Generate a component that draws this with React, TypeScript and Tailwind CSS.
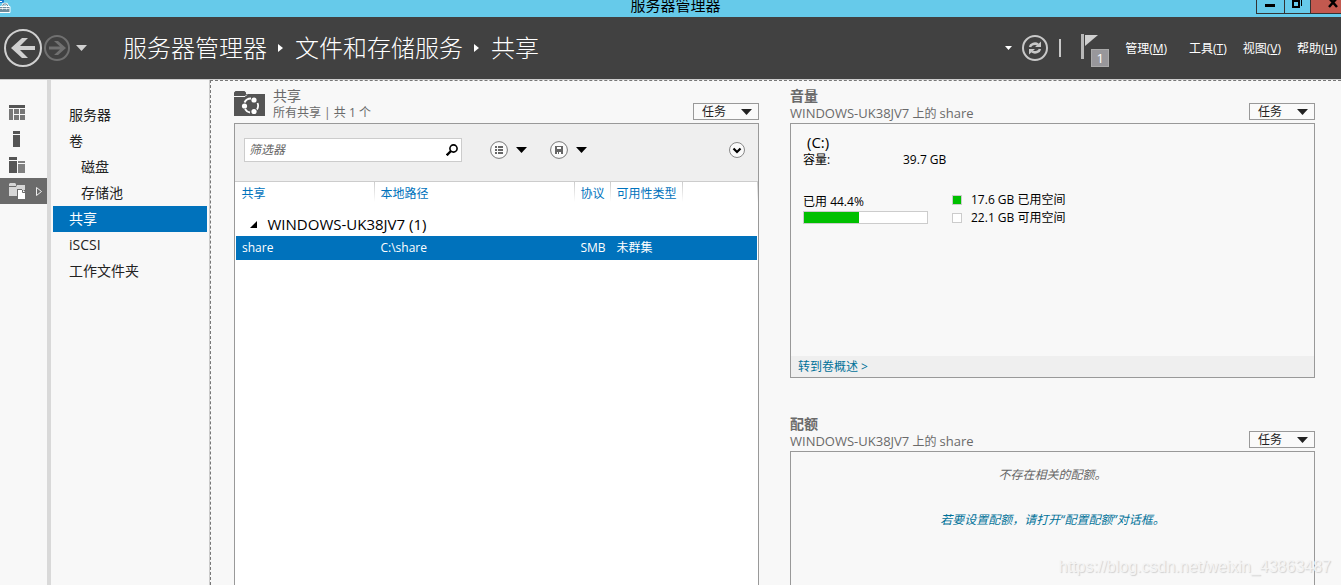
import type { ReactNode } from "react";

function Caret({ className = "" }: { className?: string }) {
  return (
    <svg className={`shrink-0 ${className}`} width="11" height="6" viewBox="0 0 11 6" aria-hidden="true">
      <path d="M0 0h11L5.5 6z" fill="currentColor" />
    </svg>
  );
}

function TasksButton() {
  return (
    <button
      type="button"
      className="mb-[3px] flex h-[17px] w-[66px] items-center justify-between border border-[#999] bg-[#fafafa] pr-1.5 pl-2 text-xs leading-none text-[#222]"
    >
      任务
      <Caret />
    </button>
  );
}

interface TileHeaderProps {
  title: string;
  subtitle: ReactNode;
  bold?: boolean;
  icon?: ReactNode;
}

function TileHeader({ title, subtitle, bold, icon }: TileHeaderProps) {
  return (
    <div className="flex h-[35px] items-end justify-between text-[#6a6a6a]">
      <div className="flex gap-2 self-start">
        {icon}
        <div>
          <h2 className={bold ? "text-sm leading-4 font-bold" : "text-sm leading-4"}>{title}</h2>
          <p className="text-xs leading-[18px] whitespace-nowrap">{subtitle}</p>
        </div>
      </div>
      <TasksButton />
    </div>
  );
}

function ShareLocation() {
  return (
    <>
      <span className="text-[13px]">WINDOWS-UK38JV7</span> 上的 <span className="text-[13px]">share</span>
    </>
  );
}

function TitleBar() {
  return (
    <div className="relative flex h-[17px] items-end justify-center overflow-hidden bg-[#66caea]">
      <svg className="absolute top-0 left-0" width="12" height="14" viewBox="0 0 12 14" aria-hidden="true">
        <path d="M0 0h4v3H0z" fill="#1b7fd4" />
        <path d="M0 1h2v1H0z" fill="#fff" />
        <path d="M2.500 6.500L3.500 4h3l1.500 2.500" fill="none" stroke="#fff" strokeWidth="2.500" />
        <path d="M2.500 6.500L3.500 4h3l1.500 2.500" fill="none" stroke="#667f8d" />
        <path d="M-1 6.500h11v6H-1z" fill="#6f8c9c" stroke="#fff" />
        <path d="M0 8.500h9.500M2.500 7.500v2M6.500 7.500v2" stroke="#fff" strokeWidth="0.800" />
      </svg>
      <span className="mr-[-10px] text-[15px] leading-6 text-black">服务器管理器</span>
      <div className="absolute top-0 right-0 flex h-3.5">
        <button type="button" aria-label="最小化" className="w-7 border-b border-l border-[#333]">
          <svg width="27" height="13" viewBox="0 0 27 13">
            <path d="M8 4h10v3H8z" fill="#000" />
          </svg>
        </button>
        <button type="button" aria-label="还原" className="w-[26px] border-b border-l border-[#333]">
          <svg width="25" height="13" viewBox="0 0 25 13">
            <path d="M8 1h6v6H8z" fill="none" stroke="#000" strokeWidth="2" />
            <path d="M16.500 0v6" stroke="#000" />
          </svg>
        </button>
        <button type="button" aria-label="关闭" className="w-[31px] border-b border-l border-[#333] bg-[#c2594f]">
          <svg width="30" height="13" viewBox="0 0 30 13">
            <path d="M18 -2l8 9M26 -2l-8 9" stroke="#000" strokeWidth="2.500" />
          </svg>
        </button>
      </div>
    </div>
  );
}

function CrumbArrow() {
  return (
    <svg className="mx-[11px]" width="6" height="8" viewBox="0 0 6 8" aria-hidden="true">
      <path d="M0 0l5 4-5 4z" fill="#fff" />
    </svg>
  );
}

const menus = [
  { label: "管理", key: "M", className: "ml-4" },
  { label: "工具", key: "T", className: "ml-[22px]" },
  { label: "视图", key: "V", className: "ml-4" },
  { label: "帮助", key: "H", className: "ml-4" },
];

function Header() {
  return (
    <header className="flex h-[62px] items-center bg-[#414141] px-1 text-white">
      <button type="button" aria-label="后退">
        <svg width="38" height="38" viewBox="0 0 38 38">
          <circle cx="19" cy="19" r="18" fill="none" stroke="#d0d0d0" strokeWidth="2" />
          <path d="M7 19L18 9h6l-8 8h15v4H16l8 8h-6z" fill="#d0d0d0" />
        </svg>
      </button>
      <button type="button" aria-label="前进" className="ml-0.5">
        <svg width="26" height="26" viewBox="0 0 26 26">
          <circle cx="13" cy="13" r="12" fill="none" stroke="#707070" strokeWidth="2" />
          <path d="M22 13l-8-7h-4l6 5.500H5v3h11L10 20h4z" fill="#707070" />
        </svg>
      </button>
      <button type="button" aria-label="历史记录" className="ml-1.5 text-[#d0d0d0]">
        <Caret />
      </button>

      <nav className="ml-9 flex items-center text-2xl font-light whitespace-nowrap">
        <a href="#dashboard">服务器管理器</a>
        <CrumbArrow />
        <a href="#storage">文件和存储服务</a>
        <CrumbArrow />
        <a href="#shares">共享</a>
      </nav>

      <div className="ml-auto flex items-center">
        <svg width="7" height="4" viewBox="0 0 7 4" aria-hidden="true">
          <path d="M0 0h7L3.500 4z" fill="#fff" />
        </svg>
        <button type="button" aria-label="刷新" className="ml-2.5">
          <svg width="26" height="26" viewBox="0 0 26 26">
            <circle cx="13" cy="13" r="12" fill="none" stroke="#c8c8c8" strokeWidth="2" />
            <path d="M8 12a5 4 0 0 1 8-2.500M18 14a5 4 0 0 1-8 2.500" fill="none" stroke="#c8c8c8" strokeWidth="2.500" />
            <path d="M19 6.500V12h-6zM7 19.500V14h6z" fill="#c8c8c8" />
          </svg>
        </button>
        <span className="ml-[11px] h-[18px] w-0.5 bg-[#c8c8c8]" />
        <button type="button" aria-label="通知" className="relative ml-5 h-[34px] w-7">
          <svg className="-mt-1" width="18" height="25" viewBox="0 0 18 25">
            <path d="M0 0h3v25H0z" fill="#b8b8b8" />
            <path d="M4 1h13L4 12z" fill="#d0d0d0" />
          </svg>
          <span className="absolute right-0 bottom-[-2px] flex size-[18px] items-center justify-center border border-[#aaa] bg-[#98979b] text-[13px] leading-none">
            1
          </span>
        </button>
        {menus.map((m) => (
          <button key={m.key} type="button" className={`pt-0.5 text-xs whitespace-nowrap ${m.className}`}>
            {m.label}(<u>{m.key}</u>)
          </button>
        ))}
      </div>
    </header>
  );
}

function Rail() {
  return (
    <nav className="w-[47px] shrink-0 pt-5">
      <a href="#dashboard" aria-label="仪表板" className="flex h-[26px] items-center pl-[9px]">
        <svg width="16" height="16" viewBox="0 0 16 16">
          <path d="M0 0h16v3H0z" fill="#555" />
          <path d="M0 4h4v11H0zM5 4h5v5H5zM11 4h5v5h-5zM5 10h5v5H5zM11 10h5v5h-5z" fill="#777" />
        </svg>
      </a>
      <a href="#local" aria-label="本地服务器" className="flex h-[26px] items-center pl-[13px]">
        <svg width="7" height="16" viewBox="0 0 7 16">
          <path d="M0 0h7v3H0zM0 4h7v12H0z" fill="#555" />
        </svg>
      </a>
      <a href="#all" aria-label="所有服务器" className="flex h-[26px] items-center pl-[9px]">
        <svg width="16" height="16" viewBox="0 0 16 16">
          <path d="M0 0h8v3H0zM0 4h8v12H0z" fill="#555" />
          <path d="M9 4h7v2H9zM9 7h7v9H9z" fill="#808080" />
        </svg>
      </a>
      <a
        href="#storage"
        aria-label="文件和存储服务"
        className="flex h-[26px] items-center justify-between bg-[#6b6b6b] pr-1 pl-[9px]"
      >
        <svg width="16" height="16" viewBox="0 0 16 16">
          <path d="M0 1l1-1h5l1 1v2H0zM0 4h7l1-2h8v5h-3V6H8v7H0z" fill="#d6d6d6" />
          <path d="M9 7h5l2 2v7H9z" fill="#fff" />
          <path d="M13.500 7v2.500H16" fill="none" stroke="#6b6b6b" />
        </svg>
        <svg width="8" height="11" viewBox="0 0 8 11">
          <path d="M1.500 1.500l5 4-5 4z" fill="none" stroke="#eee" />
        </svg>
      </a>
    </nav>
  );
}

const sections = [
  { id: "servers", label: "服务器" },
  { id: "volumes", label: "卷" },
  { id: "disks", label: "磁盘", nested: true },
  { id: "pools", label: "存储池", nested: true },
  { id: "shares", label: "共享", active: true },
  { id: "iscsi", label: "iSCSI" },
  { id: "folders", label: "工作文件夹" },
];

function Sidebar() {
  return (
    <nav className="w-[163px] shrink-0 border-r border-l-4 border-r-[#ccc] border-l-[#d9d9d9] px-0.5 pt-[22px] text-sm text-[#222]">
      {sections.map((s) => (
        <a
          key={s.id}
          href={`#${s.id}`}
          className={`flex h-[26px] items-center ${s.nested ? "pl-7" : "pl-4"} ${
            s.active ? "bg-[#0072bc] text-white" : ""
          }`}
        >
          {s.label}
        </a>
      ))}
    </nav>
  );
}

function ShareIcon() {
  return (
    <svg className="mt-[3px]" width="31" height="25" viewBox="0 0 31 25" aria-hidden="true">
      <path d="M0 1.500L1.500 0h9L12 1.500V3h19v22H0z" fill="#555" />
      <path d="M0 5.500h11l2-2" fill="none" stroke="#f8f8f8" />
      <path
        d="M10.500 11.500A7 7 0 0 1 17 7.500M23.500 12A7 7 0 0 1 23 18.500M16 21.500A7 7 0 0 1 11 18"
        fill="none"
        stroke="#fff"
        strokeWidth="1.800"
      />
      <circle cx="20" cy="9" r="2.600" fill="#fff" />
      <circle cx="10.500" cy="15" r="2.600" fill="#fff" />
      <circle cx="20" cy="20.500" r="2.600" fill="#fff" />
    </svg>
  );
}

function Toolbar() {
  return (
    <div className="flex h-[58px] items-start border-b border-[#ccc] bg-[#efefef] pt-3.5 pr-[13px] pl-[9px]">
      <div className="flex h-6 w-[218px] items-center border border-[#ccc] bg-white pr-[3px] pl-1">
        <input
          type="text"
          aria-label="筛选器"
          placeholder="筛选器"
          className="min-w-0 flex-1 text-xs italic outline-none placeholder:text-[#666]"
        />
        <button type="button" aria-label="搜索">
          <svg width="12" height="12" viewBox="0 0 12 12">
            <circle cx="7.500" cy="4.500" r="3.600" fill="none" stroke="#000" strokeWidth="1.600" />
            <path d="M5 7l-4.300 4.300" stroke="#000" strokeWidth="2.400" />
          </svg>
        </button>
      </div>
      <button type="button" aria-label="分组" className="ml-7 flex h-6 items-center gap-2">
        <svg width="18" height="18" viewBox="0 0 18 18">
          <circle cx="9" cy="9" r="8.400" fill="#fafafa" stroke="#777" />
          <path d="M5 5h2v2H5zM8 5h5v2H8zM5 8h2v2H5zM8 8h5v2H8zM5 11h2v2H5zM8 11h5v2H8z" fill="#666" />
        </svg>
        <Caret />
      </button>
      <button type="button" aria-label="保存查询" className="ml-[23px] flex h-6 items-center gap-2">
        <svg width="18" height="18" viewBox="0 0 18 18">
          <circle cx="9" cy="9" r="8.400" fill="#fafafa" stroke="#777" />
          <path d="M5 5h8v8H5z" fill="#666" />
          <path d="M7 6h4v2H7zM7 11h4v2H7z" fill="#fff" />
          <path d="M8 11h1v2H8z" fill="#666" />
        </svg>
        <Caret />
      </button>
      <button type="button" aria-label="展开" className="ml-auto flex h-6 items-center">
        <svg width="16" height="16" viewBox="0 0 16 16">
          <circle cx="8" cy="8" r="7.500" fill="#fafafa" stroke="#888" />
          <path d="M4.500 6.500L8 10l3.500-3.500" fill="none" stroke="#000" strokeWidth="2.200" />
        </svg>
      </button>
    </div>
  );
}

function HeadCell({ children }: { children?: ReactNode }) {
  return (
    <th className="relative pl-1.5 font-normal whitespace-nowrap">
      {children}
      <span className="absolute top-0 right-0 h-5 w-px bg-linear-to-b from-[#ccc] to-white" />
    </th>
  );
}

function SharesTile() {
  return (
    <section className="flex flex-col">
      <TileHeader title="共享" subtitle="所有共享 | 共 1 个" icon={<ShareIcon />} />
      <div className="flex-1 border border-b-0 border-[#999] bg-white">
        <Toolbar />
        <table className="w-full table-fixed border-collapse text-left text-xs">
          <colgroup>
            <col className="w-[139px]" />
            <col className="w-[200px]" />
            <col className="w-9" />
            <col className="w-[72px]" />
            <col />
          </colgroup>
          <thead>
            <tr className="h-6 text-[#0072bc]">
              <HeadCell>共享</HeadCell>
              <HeadCell>本地路径</HeadCell>
              <HeadCell>协议</HeadCell>
              <HeadCell>可用性类型</HeadCell>
              <HeadCell />
            </tr>
          </thead>
          <tbody>
            <tr className="h-[30px]">
              <td colSpan={5} className="pt-1.5 pl-3.5 text-[15px] leading-5 text-black">
                <span className="flex items-center gap-2.5">
                  <svg width="8" height="7" viewBox="0 0 8 7" aria-hidden="true">
                    <path d="M7 0v7H0z" fill="#000" />
                  </svg>
                  WINDOWS-UK38JV7 (1)
                </span>
              </td>
            </tr>
            <tr className="h-6 border-x border-white bg-[#0072bc] text-white">
              <td className="pl-1.5">share</td>
              <td className="pl-1.5">C:\share</td>
              <td className="pl-1.5">SMB</td>
              <td className="pl-1.5">未群集</td>
              <td />
            </tr>
          </tbody>
        </table>
      </div>
    </section>
  );
}

const usedPercent = 44.4;

function VolumeTile() {
  return (
    <section className="mb-[38px]">
      <TileHeader title="音量" subtitle={<ShareLocation />} bold />
      <div className="flex h-[255px] flex-col justify-between border border-[#999] text-xs text-black">
        <div className="px-3 pt-[9px]">
          <h3 className="pl-1 text-[15px] leading-[18px]">(C:)</h3>
          <dl className="flex leading-[18px]">
            <dt className="w-[100px]">容量:</dt>
            <dd>39.7 GB</dd>
          </dl>
          <div className="mt-6 flex gap-6 leading-[18px]">
            <div className="w-[125px]">
              <p>已用 {usedPercent}%</p>
              <div className="h-[13px] border border-[#ccc] bg-white">
                <div className="h-full bg-[#00c000]" style={{ width: `${usedPercent}%` }} />
              </div>
            </div>
            <ul className="-mt-0.5">
              <li className="flex items-center gap-[9px]">
                <span className="size-2.5 border border-[#ccc] bg-[#00c000]" />
                17.6 GB 已用空间
              </li>
              <li className="flex items-center gap-[9px]">
                <span className="size-2.5 border border-[#ccc] bg-white" />
                22.1 GB 可用空间
              </li>
            </ul>
          </div>
        </div>
        <div className="flex h-[21px] items-center bg-[#efefef] pl-[7px]">
          <a href="#volumes" className="text-[#007299]">
            转到卷概述 &gt;
          </a>
        </div>
      </div>
    </section>
  );
}

function QuotaTile() {
  return (
    <section className="flex flex-1 flex-col">
      <TileHeader title="配额" subtitle={<ShareLocation />} bold />
      <div className="flex-1 border border-b-0 border-[#999] pt-3.5 text-center text-xs leading-[18px] italic">
        <p className="text-[#666]">不存在相关的配额。</p>
        <a href="#quota" className="mt-[27px] block text-[#007299]">
          若要设置配额，请打开“配置配额”对话框。
        </a>
      </div>
    </section>
  );
}

export default function App() {
  return (
    <div className="relative flex min-h-screen flex-col bg-[#f8f8f8] font-['Open_Sans','Noto_Sans_CJK_SC',sans-serif]">
      <TitleBar />
      <Header />
      <div className="flex flex-1 border-t border-[#ccc]">
        <Rail />
        <Sidebar />
        <main className="grid flex-1 grid-cols-2 gap-[31px] border-t border-l border-dashed border-[#777] pt-[7px] pr-[26px] pl-[23px]">
          <SharesTile />
          <div className="flex flex-col">
            <VolumeTile />
            <QuotaTile />
          </div>
        </main>
      </div>
      <span className="absolute right-2.5 bottom-2 font-['Liberation_Sans',sans-serif] text-base leading-5 text-[#f4f4f4] [text-shadow:1px_1px_1px_#d0d0d0]">
        https://blog.csdn.net/weixin_43863487
      </span>
    </div>
  );
}
